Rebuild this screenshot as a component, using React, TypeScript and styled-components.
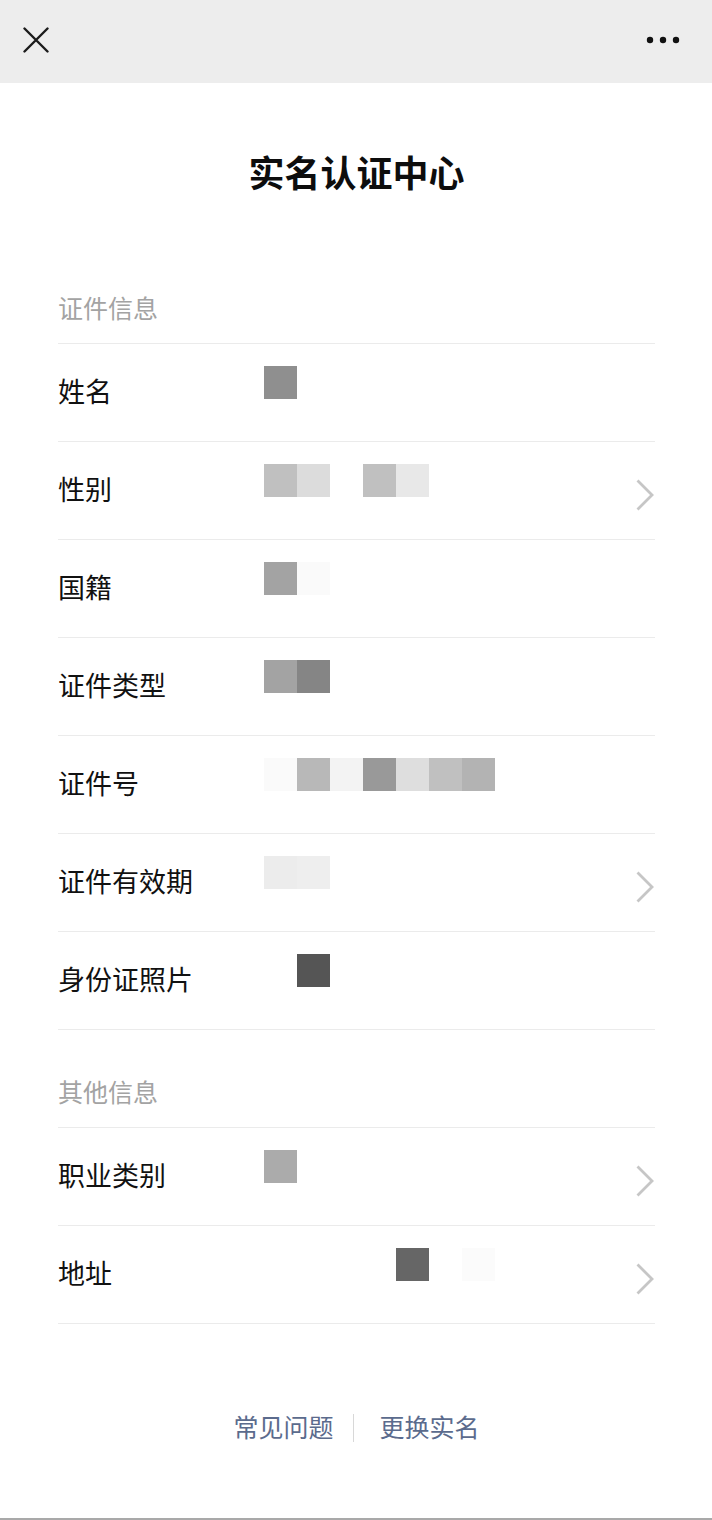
import React, {FC} from 'react';
import styled, {createGlobalStyle} from 'styled-components';

const GlobalStyle = createGlobalStyle`
  html, body {
    margin: 0;
    padding: 0;
    background: #ffffff;
  }
  body {
    font-family: "Noto Sans CJK SC", "Noto Sans", sans-serif;
    color: #111111;
  }
`

// each cell of the blurred value is 33px wide; null = empty cell
type Cell = string | null

interface InfoRow {
    label: string
    cells: Cell[]
    arrow?: boolean
}

const idRows: InfoRow[] = [
    {label: '姓名', cells: ['#8f8f8f']},
    {label: '性别', cells: ['#c0c0c0', '#dcdcdc', null, '#c0c0c0', '#e8e8e8'], arrow: true},
    {label: '国籍', cells: ['#a3a3a3', '#fafafa']},
    {label: '证件类型', cells: ['#a3a3a3', '#858585']},
    {label: '证件号', cells: ['#fafafa', '#b8b8b8', '#f3f3f3', '#999999', '#dedede', '#c0c0c0', '#b3b3b3']},
    {label: '证件有效期', cells: ['#ececec', '#eeeeee'], arrow: true},
    {label: '身份证照片', cells: [null, '#555555']},
]

const otherRows: InfoRow[] = [
    {label: '职业类别', cells: ['#ababab'], arrow: true},
    {label: '地址', cells: [null, null, null, null, '#666666', null, '#fbfbfb'], arrow: true},
]

const CloseIcon = () => (
    <svg width="26" height="26" viewBox="0 0 26 26">
        <path d="M1.5 1.5 L24.5 24.5 M24.5 1.5 L1.5 24.5" stroke="#1b1b1b" strokeWidth="2.4" strokeLinecap="round"/>
    </svg>
)

const MoreIcon = () => (
    <svg width="36" height="8" viewBox="0 0 36 8">
        <circle cx="4" cy="4" r="3.2" fill="#111"/>
        <circle cx="17" cy="4" r="3.2" fill="#111"/>
        <circle cx="30" cy="4" r="3.2" fill="#111"/>
    </svg>
)

const Chevron = () => (
    <svg width="20" height="34" viewBox="0 0 20 34">
        <path d="M2.5 2.5 L17 17 L2.5 31.5" fill="none" stroke="#c6c6c6" strokeWidth="2.8"/>
    </svg>
)

const Section: FC<{title: string, rows: InfoRow[]}> = ({title, rows}) => (
    <>
        <SectionLabel>{title}</SectionLabel>
        <List>
            {rows.map(row => (
                <Row key={row.label}>
                    <Label>{row.label}</Label>
                    <Value>
                        {row.cells.map((c, i) => <Pixel key={i} color={c}/>)}
                    </Value>
                    <Arrow>{row.arrow && <Chevron/>}</Arrow>
                </Row>
            ))}
        </List>
    </>
)

const App: FC = () => {
    return (
        <Page>
            <GlobalStyle/>
            <TopBar>
                <IconButton><CloseIcon/></IconButton>
                <IconButton><MoreIcon/></IconButton>
            </TopBar>
            <Content>
                <Title>实名认证中心</Title>
                <Section title="证件信息" rows={idRows}/>
                <Section title="其他信息" rows={otherRows}/>
                <Footer>
                    <FooterLink>常见问题</FooterLink>
                    <FooterDivider/>
                    <FooterLink>更换实名</FooterLink>
                </Footer>
            </Content>
            <BottomEdge/>
        </Page>
    );
};

export default App;


const Page = styled.div`
  display: flex;
  flex-direction: column;
  min-height: 1520px;
  background: #ffffff;
`
const TopBar = styled.div`
  display: flex;
  align-items: center;
  justify-content: space-between;
  height: 83px;
  padding: 0 30px 3px 23px;
  box-sizing: border-box;
  background: #ededed;
`
const IconButton = styled.div`
  display: flex;
  align-items: center;
  justify-content: center;
`
const Content = styled.div`
  flex: 1;
  display: flex;
  flex-direction: column;
  padding: 0 57px 0 58px;
`
const Title = styled.h1`
  margin: 0 0 50px;
  padding-top: 63px;
  font-size: 36px;
  line-height: 50px;
  font-weight: 700;
  text-align: center;
  color: #0d0d0d;
`
const SectionLabel = styled.div`
  padding: 43px 0 18px 0;
  font-size: 25px;
  line-height: 36px;
  color: #a3a3a3;
`
const List = styled.div`
  border-bottom: 1px solid #ebebeb;
`
const Row = styled.div`
  display: flex;
  align-items: center;
  height: 98px;
  box-sizing: border-box;
  border-top: 1px solid #ebebeb;
`
const Label = styled.div`
  width: 206px;
  margin-bottom: 4px;
  font-size: 27px;
  line-height: 40px;
  color: #111111;
`
const Value = styled.div`
  flex: 1;
  display: flex;
  align-self: flex-start;
  margin-top: 22px;
`
const Pixel = styled.div<{color: string | null}>`
  width: 33px;
  height: 33px;
  background: ${props => props.color ?? 'transparent'};
`
const Arrow = styled.div`
  display: flex;
  align-items: center;
  width: 20px;
  height: 34px;
  margin-top: 8px;
`
const Footer = styled.div`
  display: flex;
  align-items: center;
  justify-content: center;
  margin-top: 84px;
`
const FooterLink = styled.span`
  font-size: 25px;
  line-height: 36px;
  color: #5b6b8d;
`
const FooterDivider = styled.span`
  width: 1px;
  height: 28px;
  margin: 4px 26px 0 19px;
  background: #d8d8d8;
`
const BottomEdge = styled.div`
  height: 2px;
  background: #a9a9a9;
`
